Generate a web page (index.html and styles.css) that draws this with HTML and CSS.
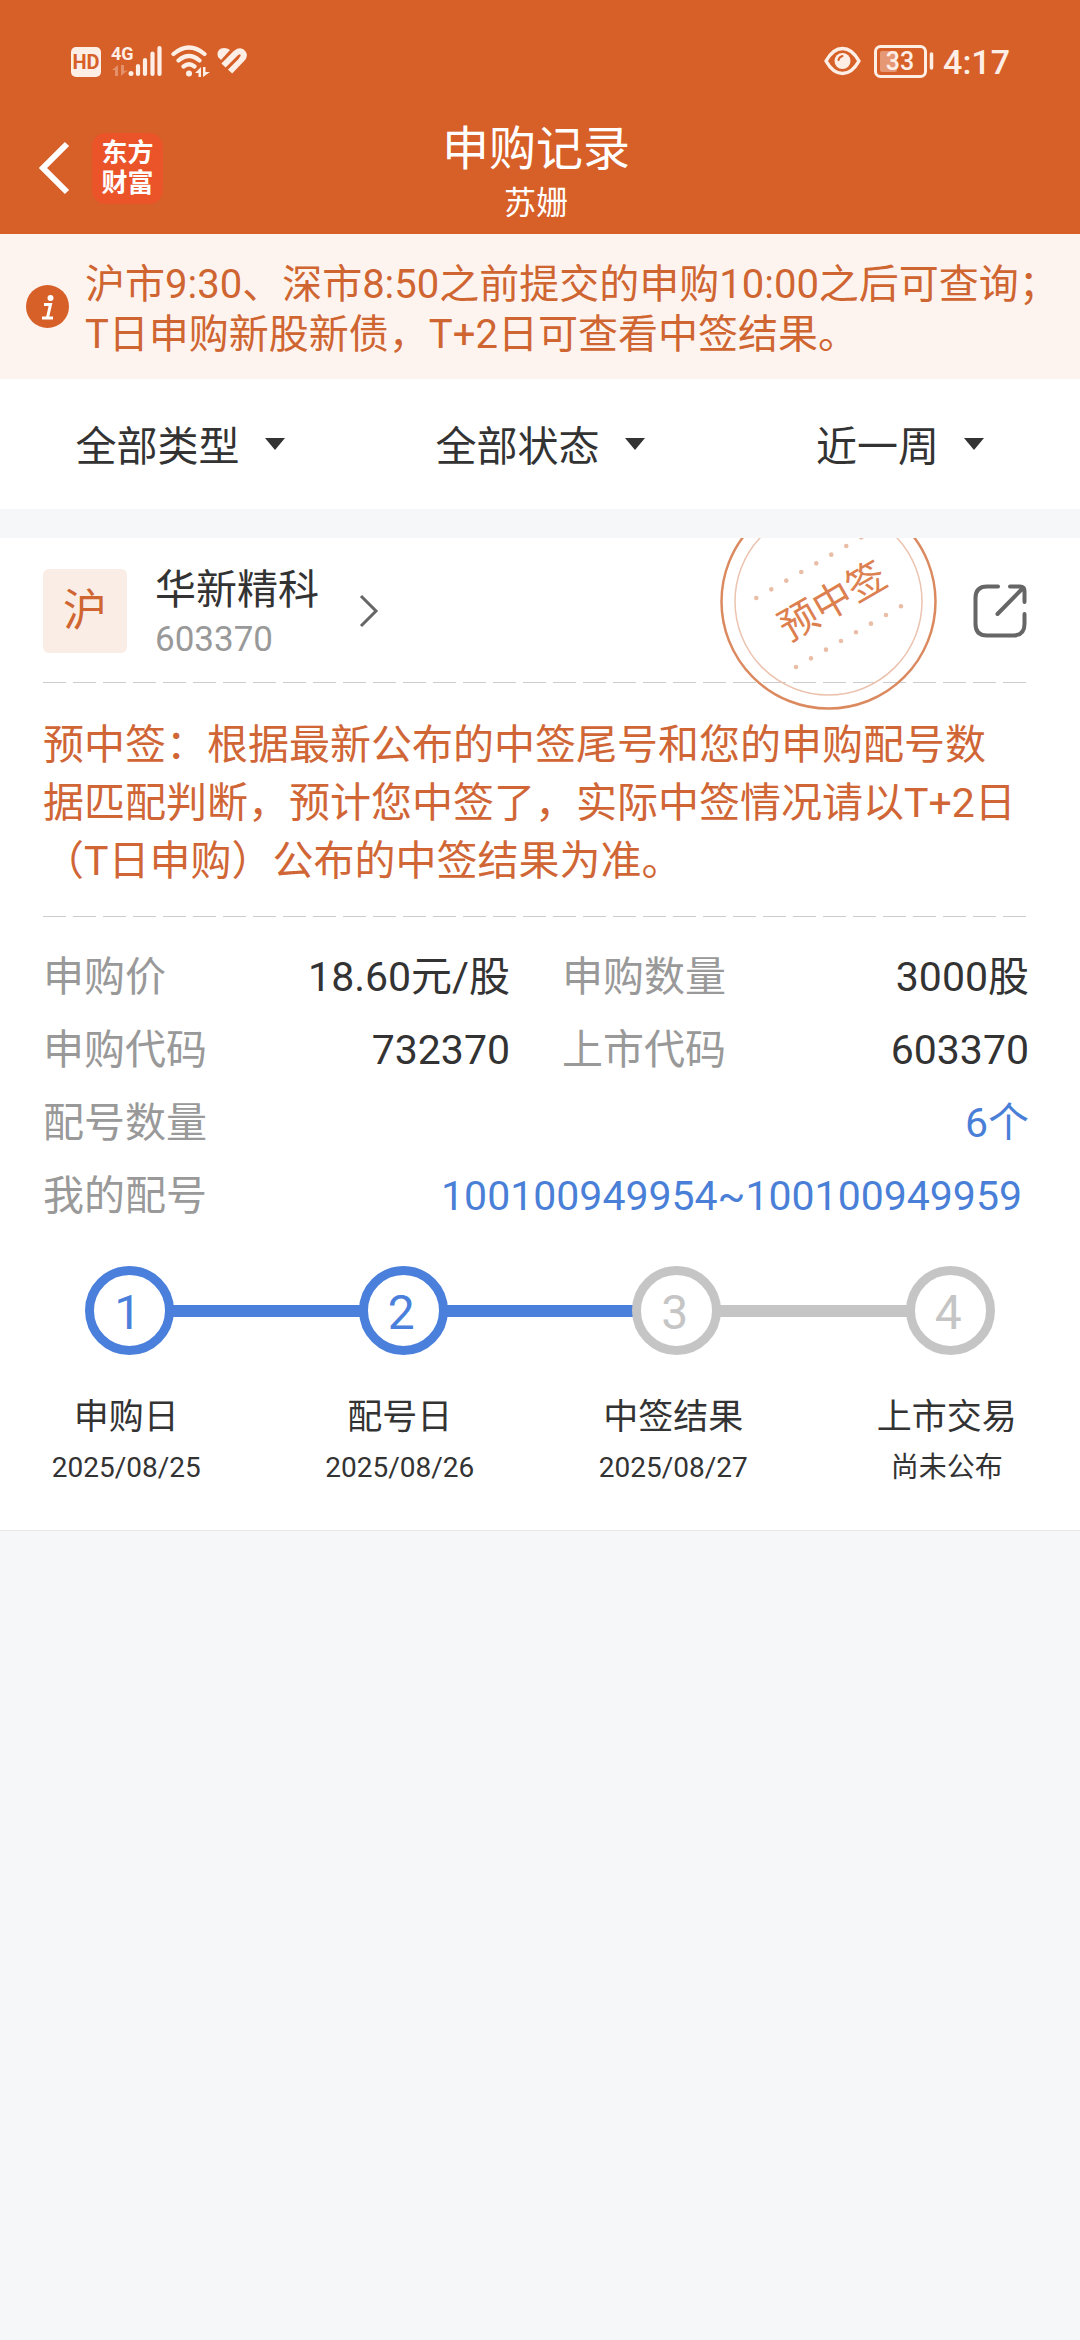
FILE: index.html
```html
<!DOCTYPE html>
<html lang="zh-CN">
<head>
<meta charset="utf-8">
<meta name="viewport" content="width=device-width, initial-scale=1">
<title>申购记录</title>
<link rel="stylesheet" href="styles.css">
</head>
<body>
<header class="header">
  <div class="status">
    <div class="status-left">
      <svg width="180" height="44" viewBox="70 40 180 44" fill="#fdeee6" aria-hidden="true">
        <rect x="71" y="47" width="30" height="30" rx="5"/>
        <text class="hd" x="86" y="69" text-anchor="middle">HD</text>
        <text class="net" x="111" y="60">4G</text>
        <g opacity=".35"><path d="M112 70l6-5v11h-3v-6zM121 65h3v6l4-1-7 6z"/></g>
        <circle cx="131" cy="73.500" r="2.500"/>
        <path d="M138 66v8M145 60v14M152.500 53.500v20.500M159.500 48v26" stroke="#fdeee6" stroke-width="4.200" stroke-linecap="round"/>
        <g fill="none" stroke="#fdeee6" stroke-width="4.200" stroke-linecap="round">
          <path d="M173.500 54q15.500-13 31 0M178.500 60.500q10.500-9 21 0M183.500 66.500q5.500-4.500 11 0"/>
        </g>
        <circle cx="189" cy="73.500" r="3"/>
        <path d="M195 73l6-6v10h-2.500v-4zM203 67h2.500v5h4.500l-7 5z"/>
        <path d="M218 57q-2-6 3-8.500 5-1.500 9 1.500l-9 10z"/>
        <path d="M223.500 65.500L236 53q4.500-3.500 7 0 2 3-1 6l-12 12.500" fill="none" stroke="#fdeee6" stroke-width="6"/>
        <path d="M227 69l11.500-11.500" stroke="#d75f28" stroke-width="2"/>
      </svg>
    </div>
    <div class="status-right">
      <svg width="112" height="44" viewBox="823 40 112 44" fill="none" stroke="#fdeee6" aria-hidden="true">
        <path d="M826 61q7-12.500 16.500-12.500T859 61q-7 12.500-16.500 12.500T826 61z" stroke-width="3.500" stroke-linejoin="round"/>
        <circle cx="842.500" cy="61" r="8" fill="#fdeee6" stroke="none"/>
        <path d="M838.500 60q.5-3 4-4" stroke="#d75f28" stroke-width="2" stroke-linecap="round"/>
        <rect x="875.500" y="46.500" width="50" height="30" rx="5" stroke-width="3"/>
        <rect x="880" y="51" width="17" height="21" rx="2" fill="#fdeee6" fill-opacity=".4" stroke="none"/>
        <path d="M931.500 54v14" stroke-width="3.500" stroke-linecap="round"/>
        <text class="charge" x="900" y="70" text-anchor="middle" fill="#fdeee6" stroke="none">33</text>
      </svg>
      <time class="clock">4:17</time>
    </div>
  </div>
  <div class="nav">
    <div class="nav-left">
      <button class="back" type="button" aria-label="返回">
        <svg width="32" height="54" viewBox="0 0 32 54" fill="none" stroke="#fff" stroke-width="6"><path d="M29 3L5 27l24 24"/></svg>
      </button>
      <div class="logo"><span>东方</span><span>财富</span></div>
    </div>
    <div class="nav-title">
      <h1>申购记录</h1>
      <p>苏姗</p>
    </div>
  </div>
</header>

<main>
  <section class="notice">
    <svg class="notice-icon" width="43" height="43" viewBox="0 0 43 43" aria-hidden="true">
      <circle cx="21.500" cy="21.500" r="21.500" fill="#d75f28"/>
      <circle cx="24.500" cy="13" r="3" fill="#fff"/>
      <path d="M18 19.500h6.500l-3 13M16 33h11" fill="none" stroke="#fff" stroke-width="3"/>
    </svg>
    <p class="notice-text">沪市9:30、深市8:50之前提交的申购10:00之后可查询；<br>T日申购新股新债，T+2日可查看中签结果。</p>
  </section>

  <form class="filters">
    <label class="filter">
      <select aria-label="类型"><option>全部类型</option><option>新股</option><option>新债</option></select>
      <svg width="20" height="12" viewBox="0 0 20 12" aria-hidden="true"><path d="M0 0h20L10 12z" fill="#333"/></svg>
    </label>
    <label class="filter">
      <select aria-label="状态"><option>全部状态</option><option>已中签</option><option>未中签</option></select>
      <svg width="20" height="12" viewBox="0 0 20 12" aria-hidden="true"><path d="M0 0h20L10 12z" fill="#333"/></svg>
    </label>
    <label class="filter">
      <select aria-label="时间"><option>近一周</option><option>近一月</option><option>近三月</option></select>
      <svg width="20" height="12" viewBox="0 0 20 12" aria-hidden="true"><path d="M0 0h20L10 12z" fill="#333"/></svg>
    </label>
  </form>

  <article class="card">
    <div class="card-head">
      <span class="market">沪</span>
      <a class="stock" href="#stock">
        <span class="stock-text"><strong>华新精科</strong><span>603370</span></span>
        <svg width="20" height="34" viewBox="0 0 20 34" fill="none" stroke="#666" stroke-width="3" aria-hidden="true"><path d="M2 2l15 15L2 32"/></svg>
      </a>
      <button class="share" type="button" aria-label="分享">
        <svg width="54" height="54" viewBox="0 0 54 54" fill="none" stroke="#666" stroke-width="4" stroke-linecap="round" stroke-linejoin="round">
          <path d="M25 2.500H14Q2.500 2.500 2.500 14v26q0 11.500 11.500 11.500h26q11.500 0 11.500-11.500V30"/>
          <path d="M37 2.500h10q4.500 0 4.500 4.500v11M49 5L24.500 30"/>
        </svg>
      </button>
      <svg class="stamp" width="218" height="218" viewBox="0 0 218 218" aria-label="预中签">
        <circle cx="108.500" cy="108.500" r="107" fill="none" stroke="#db8a60" stroke-width="2.500"/>
        <circle cx="108.500" cy="108.500" r="93.500" fill="none" stroke="#ebc3af" stroke-width="1.500"/>
        <g fill="none" stroke="#e9bda6" stroke-width="4.600" stroke-linecap="round">
          <path d="M36.300 105L141.300 44.300" stroke-dasharray="0 17.320"/>
          <path d="M76 174L181.500 113" stroke-dasharray="0 17.320"/>
        </g>
        <text class="stamp-text" x="112" y="122" text-anchor="middle" transform="rotate(-30 112 107)">预中签</text>
      </svg>
    </div>
    <p class="forecast">预中签：根据最新公布的中签尾号和您的申购配号数<br>据匹配判断，预计您中签了，实际中签情况请以T+2日<br>（T日申购）公布的中签结果为准。</p>
    <dl class="details">
      <div><dt>申购价</dt><dd>18.60元/股</dd></div>
      <div><dt>申购数量</dt><dd>3000股</dd></div>
      <div><dt>申购代码</dt><dd>732370</dd></div>
      <div><dt>上市代码</dt><dd>603370</dd></div>
      <div class="wide"><dt>配号数量</dt><dd><a href="#count">6个</a></dd></div>
      <div class="wide"><dt>我的配号</dt><dd><a class="numbers" href="#numbers">100100949954~100100949959</a></dd></div>
    </dl>
    <div class="progress">
      <ol class="steps">
        <li class="done">
          <div class="track"><i></i><b>1</b><i class="on"></i></div>
          <h2>申购日</h2><p>2025/08/25</p>
        </li>
        <li class="done">
          <div class="track"><i class="on"></i><b>2</b><i class="on"></i></div>
          <h2>配号日</h2><p>2025/08/26</p>
        </li>
        <li>
          <div class="track"><i class="on"></i><b>3</b><i class="off"></i></div>
          <h2>中签结果</h2><p>2025/08/27</p>
        </li>
        <li>
          <div class="track"><i class="off"></i><b>4</b><i></i></div>
          <h2>上市交易</h2><p>尚未公布</p>
        </li>
      </ol>
    </div>
  </article>
</main>
</body>
</html>
```
FILE: styles.css
```css
* {
  box-sizing: border-box;
  margin: 0;
  padding: 0;
}

body {
  background: #f6f7f9;
  color: #333;
  font-family: Roboto, "Noto Sans CJK SC", sans-serif;
  font-size: 41px;
}

button,
select {
  border: 0;
  background: none;
  color: inherit;
  font: inherit;
}

a {
  color: inherit;
  text-decoration: none;
}

svg {
  display: block;
  flex: none;
}

/* Header */
.header {
  background: #d75f28;
  color: #fff;
}

.status {
  display: flex;
  justify-content: space-between;
  align-items: center;
  height: 102px;
  padding: 22px 70px 0;
}

.status-right {
  display: flex;
  align-items: center;
  gap: 8px;
}

.hd {
  fill: #d75f28;
  font-size: 20px;
  font-weight: 700;
}

.net {
  font-size: 18px;
  font-weight: 700;
}

.charge {
  font-size: 25px;
  font-weight: 500;
}

.clock {
  color: #fdeee6;
  font-size: 34px;
  font-weight: 500;
  line-height: 40px;
}

.nav {
  display: grid;
  grid-template-columns: 1fr auto 1fr;
  align-items: center;
  height: 132px;
  padding: 0 46px 0 38px;
}

.nav-left {
  display: flex;
  align-items: center;
  gap: 22px;
}

.logo {
  display: flex;
  flex-direction: column;
  align-items: center;
  justify-content: center;
  width: 71px;
  height: 71px;
  border-radius: 14px;
  background: #ea5428;
  font-size: 26px;
  font-weight: 700;
  line-height: 30px;
}

.nav-title {
  padding-top: 10px;
  text-align: center;
}

.nav-title h1 {
  font-size: 47px;
  font-weight: 400;
  line-height: 60px;
}

.nav-title p {
  font-size: 32px;
  line-height: 48px;
}

/* Notice */
.notice {
  display: flex;
  align-items: center;
  gap: 16px;
  padding: 18px 12px 19px 26px;
  background: #fdf4f0;
  color: #cf6531;
}

.notice-text {
  padding-top: 8px;
  font-size: 40px;
  line-height: 50px;
  white-space: nowrap;
}

/* Filters */
.filters {
  display: grid;
  grid-template-columns: repeat(3, 1fr);
  height: 130px;
  background: #fff;
}

.filter {
  display: flex;
  align-items: center;
  justify-content: center;
  gap: 25px;
}

.filter select {
  appearance: none;
  padding-top: 6px;
  line-height: 60px;
}

/* Record card */
.card {
  margin-top: 29px;
  border-bottom: 1px solid #e9e9e9;
  background: #fff;
}

.card-head,
.forecast {
  margin: 0 51px 0 43px;
  background: repeating-linear-gradient(90deg, #ccc 0 23px, transparent 23px 30px) left bottom / 100% 1px no-repeat;
}

.card-head {
  position: relative;
  display: flex;
  align-items: center;
  height: 145px;
}

.market {
  width: 84px;
  height: 84px;
  border-radius: 6px;
  background: #f9ede5;
  color: #cf6531;
  font-size: 44px;
  line-height: 84px;
  text-align: center;
}

.stock {
  display: flex;
  align-items: center;
  gap: 40px;
  margin-left: 28px;
}

.stock-text {
  display: flex;
  flex-direction: column;
  padding-top: 6px;
}

.stock-text strong {
  font-weight: 400;
  line-height: 52px;
}

.stock-text span {
  color: #999;
  font-size: 35px;
  line-height: 48px;
}

.share {
  margin-left: auto;
  margin-right: 2px;
}

/* The stamp overlaps the head and is cut off at the card's top edge */
.stamp {
  position: absolute;
  top: -45px;
  right: 91px;
  clip-path: inset(45px 0 0 0);
}

.stamp-text {
  fill: #dd8050;
  font-size: 39px;
}

.forecast {
  padding: 33px 0 27px;
  color: #d06636;
  line-height: 58px;
  white-space: nowrap;
}

/* Details */
.details {
  display: grid;
  grid-template-columns: 1fr 1fr;
  gap: 13px 52px;
  padding: 30px 51px 0 43px;
  line-height: 60px;
}

.details div {
  display: flex;
  justify-content: space-between;
}

.details .wide {
  grid-column: 1 / -1;
}

.details dt {
  color: #999;
}

.details a {
  color: #4a7fd8;
}

.details .numbers {
  padding-right: 7px;
}

/* Progress */
.progress {
  overflow: hidden;
  padding: 40px 0 37px;
}

.steps {
  display: grid;
  grid-template-columns: repeat(4, 1fr);
  margin: 0 -7px;
  list-style: none;
  text-align: center;
}

.track {
  display: grid;
  grid-template-columns: 1fr 89px 1fr;
  align-items: center;
  margin-bottom: 38px;
}

.track b {
  height: 89px;
  padding-right: 4px;
  border: 9px solid #c5c5c5;
  border-radius: 50%;
  color: #c5c5c5;
  font-size: 48px;
  font-weight: 400;
  line-height: 75px;
}

.done .track b {
  border-color: #4a7fdb;
  color: #4a7fdb;
}

.track i {
  height: 12px;
  margin: 0 -2px;
}

.track .on {
  background: #4a7fdb;
}

.track .off {
  background: #c5c5c5;
}

.steps h2 {
  padding-right: 7px;
  font-size: 35px;
  font-weight: 400;
  line-height: 50px;
}

.steps p {
  padding-right: 7px;
  font-size: 28px;
  line-height: 50px;
}
```
